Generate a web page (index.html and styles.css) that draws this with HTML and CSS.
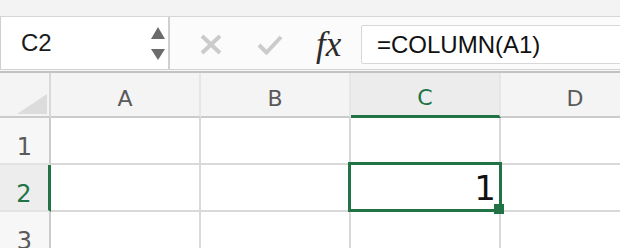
FILE: index.html
```html
<!DOCTYPE html>
<html lang="en">
<head>
    <meta charset="UTF-8">
    <meta name="viewport" content="width=device-width, initial-scale=1.0">
    <title>COLUMN function</title>
    <link rel="stylesheet" href="styles.css">
</head>
<body>
    <div class="top-band"></div>

    <div class="formula-bar">
        <div class="name-box">
            <span class="cell-ref">C2</span>
            <div class="spinner">
                <svg width="14" height="12" viewBox="0 0 14 12"><polygon points="7,0 14,12 0,12" fill="#6b6b6b"/></svg>
                <svg width="14" height="11" viewBox="0 0 14 11"><polygon points="0,0 14,0 7,11" fill="#6b6b6b"/></svg>
            </div>
        </div>
        <div class="actions">
            <svg class="icon-cancel" width="22" height="21" viewBox="0 0 22 21">
                <path d="M2 2 L20 19 M20 2 L2 19" stroke="#cbcbcb" stroke-width="4" fill="none"/>
            </svg>
            <svg class="icon-enter" width="26" height="20" viewBox="0 0 26 20">
                <path d="M2 10 L9.5 17.5 L24 2" stroke="#cbcbcb" stroke-width="4" fill="none"/>
            </svg>
            <span class="fx">fx</span>
        </div>
        <div class="formula-input">=COLUMN(A1)</div>
    </div>
    <div class="divider"></div>

    <div class="sheet">
        <div class="corner"><div class="corner-mark"></div></div>
        <div class="col-head">A</div>
        <div class="col-head">B</div>
        <div class="col-head active">C</div>
        <div class="col-head">D</div>

        <div class="row-head">1</div>
        <div class="cell"></div>
        <div class="cell"></div>
        <div class="cell"></div>
        <div class="cell"></div>

        <div class="row-head active">2</div>
        <div class="cell"></div>
        <div class="cell"></div>
        <div class="cell selected">1<span class="selection"></span></div>
        <div class="cell"></div>

        <div class="row-head">3</div>
        <div class="cell"></div>
        <div class="cell"></div>
        <div class="cell"></div>
        <div class="cell"></div>
    </div>
</body>
</html>
```

FILE: styles.css
```css
body {
    margin: 0;
    width: 620px;
    height: 248px;
    overflow: hidden;
    background-color: #f4f4f4;
    font-family: "Liberation Sans", Arial, sans-serif;
}
.top-band {
    height: 16px;
    background-color: #f3f3f3;
    border-bottom: 1px solid #d6d6d6;
}
.formula-bar {
    display: flex;
    height: 52px;
    background-color: #fbfbfb;
    border-bottom: 1px solid #d2d2d2;
}
.name-box {
    display: flex;
    align-items: center;
    box-sizing: border-box;
    width: 170px;
    padding-left: 20px;
    padding-right: 3px;
    background-color: #fff;
    border-left: 1px solid #cfcfcf;
    border-right: 2px solid #d0d0d0;
}
.cell-ref {
    font-size: 24px;
    color: #1a1a1a;
}
.spinner {
    margin-left: auto;
    display: flex;
    flex-direction: column;
    gap: 10px;
}
.spinner svg {
    display: block;
}
.actions {
    display: flex;
    align-items: center;
    padding-left: 30px;
}
.icon-cancel {
    margin-top: 3px;
}
.icon-enter {
    margin-left: 35px;
    margin-top: 3px;
}
.fx {
    width: 29px;
    margin-left: 33px;
    margin-right: 16px;
    margin-top: 4px;
    font-family: "Liberation Serif", "Times New Roman", serif;
    font-style: italic;
    font-size: 35px;
    color: #2b2b2b;
    white-space: nowrap;
}
.formula-input {
    flex: 1;
    box-sizing: border-box;
    height: 39px;
    margin-top: 8px;
    margin-right: -10px;
    padding-left: 15px;
    display: flex;
    align-items: center;
    background-color: #fff;
    border: 1px solid #d8d8d8;
    border-radius: 2px;
    font-size: 24px;
    color: #111;
}
.divider {
    height: 1px;
    background-color: #f7f7f7;
    border-bottom: 2px solid #c2c2c2;
}
.sheet {
    display: grid;
    grid-template-columns: 51px repeat(4, 150px);
    grid-template-rows: 45px 47px 47px 47px;
    background-color: #fff;
}
.sheet > div {
    box-sizing: border-box;
    border-right: 2px solid #d9d9d9;
    border-bottom: 2px solid #d9d9d9;
}
.corner {
    display: flex;
    align-items: flex-end;
    justify-content: flex-end;
    padding: 0 2px 2px 0;
    background-color: #f4f4f4;
}
.corner-mark {
    width: 30px;
    height: 20px;
    background-color: #dcdcdc;
    clip-path: polygon(100% 0, 100% 100%, 0 100%);
}
.col-head {
    display: flex;
    align-items: center;
    justify-content: center;
    padding-top: 7px;
    background-color: #f4f4f4;
    font-family: "DejaVu Sans", sans-serif;
    font-size: 22px;
    color: #5a5a5a;
}
.sheet > .col-head,
.sheet > .corner {
    border-bottom-color: #cbcbcb;
}
.sheet > .col-head {
    border-right-color: #e6e6e6;
}
.sheet > .col-head.active {
    border-bottom: 3px solid #217346;
    color: #217346;
    background-color: #ececec;
}
.row-head {
    display: flex;
    align-items: center;
    justify-content: center;
    padding-top: 12px;
    background-color: #f7f7f7;
    font-family: "DejaVu Sans", sans-serif;
    font-size: 24px;
    color: #5a5a5a;
}
.sheet > .row-head {
    border-right-color: #cbcbcb;
    border-bottom-color: #e3e3e3;
}
.sheet > .row-head.active {
    border-right: 3px solid #217346;
    color: #217346;
    background-color: #ededed;
}
.cell {
    display: flex;
    align-items: center;
    justify-content: flex-end;
    padding-right: 3px;
    font-family: "DejaVu Sans", sans-serif;
    font-size: 34px;
    color: #111;
}
.selected {
    position: relative;
}
.selection {
    position: absolute;
    top: -3px;
    left: -3px;
    right: -3px;
    bottom: -2px;
    border: 3px solid #217346;
}
.selection::after {
    content: "";
    position: absolute;
    right: -5px;
    bottom: -5px;
    width: 10px;
    height: 10px;
    background-color: #217346;
}
```
